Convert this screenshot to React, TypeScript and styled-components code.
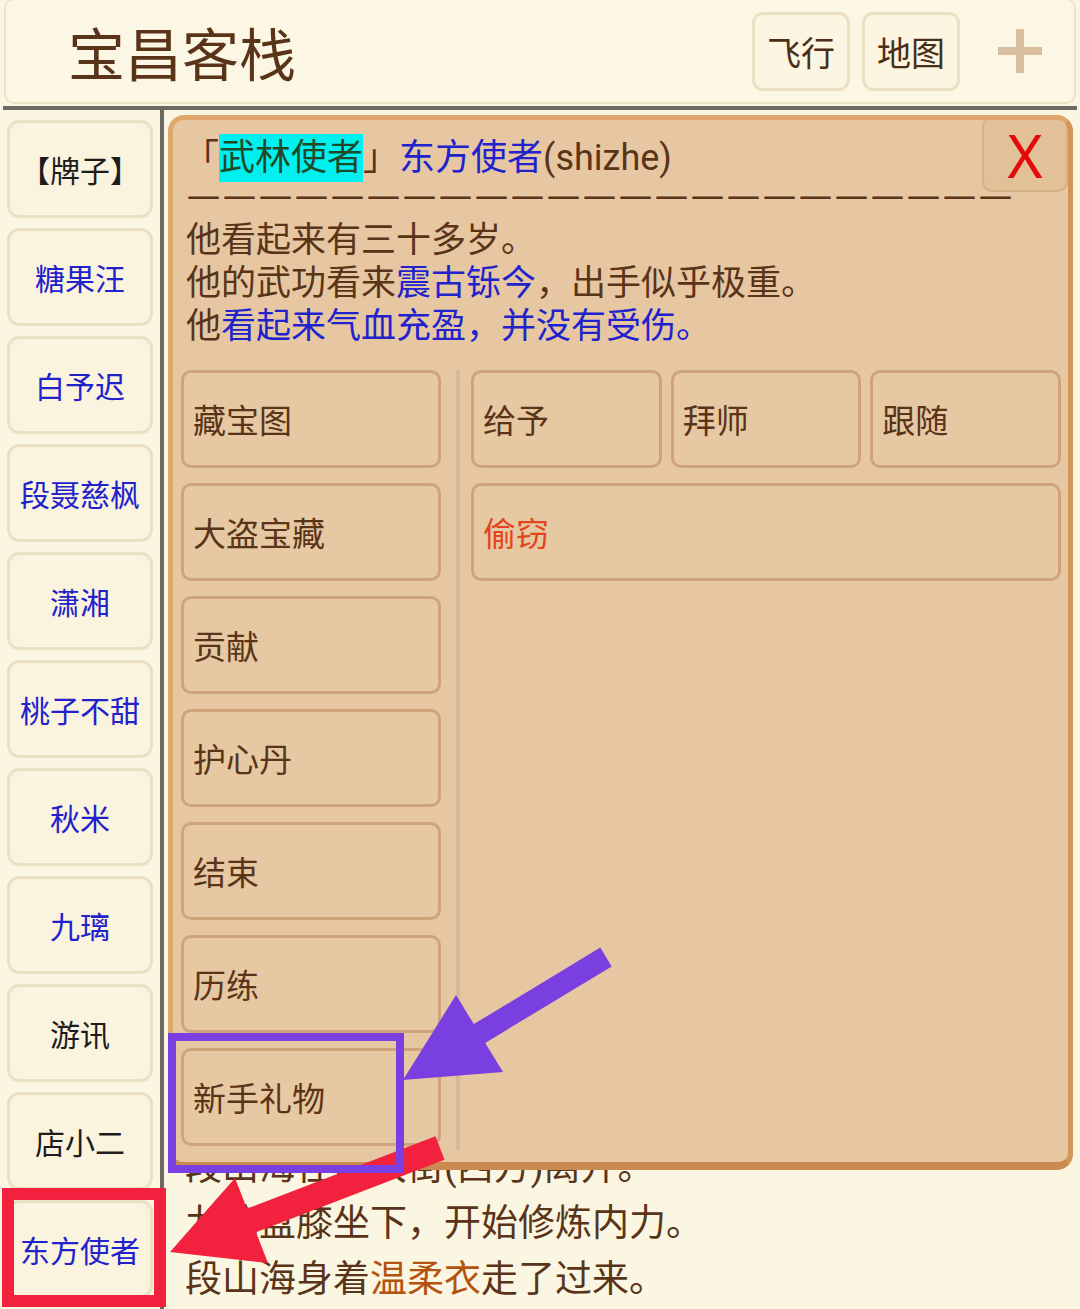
import styled, { createGlobalStyle } from "styled-components";

const GlobalStyle = createGlobalStyle`
  html, body {
    margin: 0;
    padding: 0;
    background: #fbf6e2;
  }
  body {
    font-family: Roboto, "Noto Sans CJK SC", sans-serif;
    color: #5a3418;
  }
`;

const BROWN = "#5a3418";
const BLUE = "#2222cc";
const BLACK = "#1c1c1c";

const Page = styled.div`
  position: relative;
  width: 1080px;
  height: 1309px;
  overflow: hidden;
  display: flex;
  flex-direction: column;
`;

const Header = styled.header`
  box-sizing: border-box;
  height: 106px;
  margin: -2px 4px 0;
  padding: 0 6px 0 62px;
  display: flex;
  align-items: center;
  background: #fcf7e4;
  border: 2px solid #ede2c7;
  border-radius: 10px;
`;

const Title = styled.h1`
  margin: 0;
  flex: 1;
  font-size: 57px;
  font-weight: 400;
  color: ${BROWN};
  font-family: "Noto Sans CJK SC", sans-serif;
  line-height: 1;
`;

const HeadButton = styled.div`
  box-sizing: border-box;
  width: 98px;
  height: 79px;
  margin-left: 12px;
  display: flex;
  align-items: center;
  justify-content: center;
  border: 3px solid #ebdfc4;
  border-radius: 11px;
  background: #fbf5e1;
  font-size: 34px;
  color: #4a2e18;
`;

const PlusSlot = styled.div`
  width: 96px;
  margin-left: 12px;
  display: flex;
  align-items: center;
  justify-content: center;
`;

const Main = styled.div`
  flex: 1;
  display: flex;
  margin: 2px 3px 0;
  border-top: 4px solid #6a6a62;
  min-height: 0;
`;

const Sidebar = styled.nav`
  width: 161px;
  flex-shrink: 0;
  box-sizing: border-box;
  padding: 10px 7px 0 4px;
  border-right: 4px solid #6a6a62;
  display: flex;
  flex-direction: column;
  gap: 10px;
`;

const SideButton = styled.div<{ $color: string }>`
  box-sizing: border-box;
  height: 98px;
  flex-shrink: 0;
  display: flex;
  align-items: center;
  justify-content: center;
  border: 3px solid #ebdfc4;
  border-radius: 12px;
  background: #faf3de;
  font-size: 30px;
  color: ${(p) => p.$color};
  white-space: nowrap;
`;

const Content = styled.section`
  position: relative;
  flex: 1;
  display: flex;
  flex-direction: column;
  justify-content: flex-end;
  padding: 0 0 1px 21px;
`;

const LogLine = styled.div`
  font-size: 37px;
  line-height: 56px;
  color: ${BROWN};
  white-space: nowrap;
`;

const Hl = styled.span<{ $color: string }>`
  color: ${(p) => p.$color};
`;

const Tag = styled.span`
  display: inline-block;
  line-height: 48px;
  color: #1f4a2a;
  background: #00f0f0;
`;

const Modal = styled.div`
  position: absolute;
  left: 4px;
  top: 5px;
  width: 905px;
  height: 1055px;
  box-sizing: border-box;
  border: 5px solid #dfa76b;
  border-right-color: #d29558;
  border-bottom: 8px solid #c98b4f;
  border-radius: 16px;
  background: #e6c7a1;
  padding: 13px 7px 0 8px;
  overflow: hidden;
`;

const ModalTitle = styled.div`
  margin-left: 2px;
  font-size: 36px;
  line-height: 50px;
  color: ${BROWN};
  white-space: nowrap;
`;

const DashRule = styled.div`
  margin: 0 0 0 6px;
  font-family: "Noto Sans", sans-serif;
  font-size: 33px;
  letter-spacing: 3px;
  line-height: 24px;
  color: ${BROWN};
  white-space: nowrap;
  font-feature-settings: "liga" 0, "calt" 0;
`;

const Close = styled.div`
  position: absolute;
  top: -3px;
  right: 0;
  width: 86px;
  height: 75px;
  box-sizing: border-box;
  display: flex;
  align-items: center;
  justify-content: center;
  border: 2px solid rgba(190, 140, 90, 0.35);
  border-radius: 10px;
  background: rgba(210, 160, 110, 0.15);
  color: #e20a0a;
  font-family: "Noto Sans", sans-serif;
  font-size: 60px;
  line-height: 1;
`;

const Description = styled.div`
  margin-top: 12px;
  padding-left: 5px;
  font-size: 35px;
  line-height: 43px;
  color: ${BROWN};
`;

const Actions = styled.div`
  display: flex;
  margin-top: 22px;
  height: 780px;
`;

const LeftActions = styled.div`
  width: 260px;
  flex-shrink: 0;
  display: flex;
  flex-direction: column;
  gap: 15px;
`;

const Divider = styled.div`
  width: 4px;
  flex-shrink: 0;
  margin: 0 11px 0 15px;
  background: #d6b999;
`;

const RightActions = styled.div`
  width: 590px;
  flex-shrink: 0;
  display: grid;
  grid-template-columns: repeat(3, 1fr);
  grid-auto-rows: 98px;
  gap: 15px 9px;
  align-content: start;
`;

const ActionButton = styled.div<{ $color?: string; $wide?: boolean }>`
  box-sizing: border-box;
  height: 98px;
  flex-shrink: 0;
  display: flex;
  align-items: center;
  padding-left: 9px;
  border: 3px solid #cfa47b;
  border-radius: 10px;
  background: #e6c8a2;
  font-size: 33px;
  color: ${(p) => p.$color || BROWN};
  grid-column: ${(p) => (p.$wide ? "1 / -1" : "auto")};
`;

const Annotations = styled.svg`
  position: absolute;
  left: 0;
  top: 0;
  pointer-events: none;
  z-index: 10;
`;

const sideItems: [string, string][] = [
  ["【牌子】", BLACK],
  ["糖果汪", BLUE],
  ["白予迟", BLUE],
  ["段聂慈枫", BLUE],
  ["潇湘", BLUE],
  ["桃子不甜", BLUE],
  ["秋米", BLUE],
  ["九璃", BLUE],
  ["游讯", BLACK],
  ["店小二", BLACK],
  ["东方使者", BLUE],
];

const leftActions = ["藏宝图", "大盗宝藏", "贡献", "护心丹", "结束", "历练", "新手礼物"];

export default function App() {
  return (
    <>
      <GlobalStyle />
      <Page>
        <Header>
          <Title>宝昌客栈</Title>
          <HeadButton>飞行</HeadButton>
          <HeadButton>地图</HeadButton>
          <PlusSlot>
            <svg width="44" height="44" viewBox="0 0 44 44">
              <rect x="18" y="0" width="8" height="44" fill="#d8bd9f" />
              <rect x="0" y="18" width="44" height="8" fill="#d8bd9f" />
            </svg>
          </PlusSlot>
        </Header>
        <Main>
          <Sidebar>
            {sideItems.map(([name, color]) => (
              <SideButton key={name} $color={color}>
                {name}
              </SideButton>
            ))}
          </Sidebar>
          <Content>
            <LogLine>段山海往西大街(西方)离开。</LogLine>
            <LogLine>九璃盘膝坐下，开始修炼内力。</LogLine>
            <LogLine>
              段山海身着<Hl $color="#b4520f">温柔衣</Hl>走了过来。
            </LogLine>

            <Modal>
              <ModalTitle>
                「<Tag>武林使者</Tag>」<Hl $color={BLUE}>东方使者</Hl>(shizhe)
              </ModalTitle>
              <DashRule>{"—".repeat(23)}</DashRule>
              <Close>X</Close>
              <Description>
                <div>他看起来有三十多岁。</div>
                <div>
                  他的武功看来<Hl $color={BLUE}>震古铄今</Hl>，出手似乎极重。
                </div>
                <div>
                  他<Hl $color={BLUE}>看起来气血充盈，并没有受伤。</Hl>
                </div>
              </Description>
              <Actions>
                <LeftActions>
                  {leftActions.map((a) => (
                    <ActionButton key={a}>{a}</ActionButton>
                  ))}
                </LeftActions>
                <Divider />
                <RightActions>
                  <ActionButton>给予</ActionButton>
                  <ActionButton>拜师</ActionButton>
                  <ActionButton>跟随</ActionButton>
                  <ActionButton $wide $color="#e2461c">
                    偷窃
                  </ActionButton>
                </RightActions>
              </Actions>
            </Modal>
          </Content>
        </Main>

        <Annotations width="1080" height="1309" viewBox="0 0 1080 1309">
          <polygon
            points="435.5,1136.3 247,1208.8 235,1178 170,1252 268,1263 256,1232.2 444.5,1159.7"
            fill="#f2223e"
          />
          <rect x="172" y="1037" width="228" height="132" fill="none" stroke="#7a3fe0" strokeWidth="8" />
          <polygon
            points="600.3,947.6 473.8,1024.1 456,995 403,1080 503,1072 485.2,1042.9 611.7,966.4"
            fill="#7a3fe0"
          />
          <rect x="8" y="1194" width="152" height="107" fill="none" stroke="#f2223e" strokeWidth="12" />
        </Annotations>
      </Page>
    </>
  );
}
